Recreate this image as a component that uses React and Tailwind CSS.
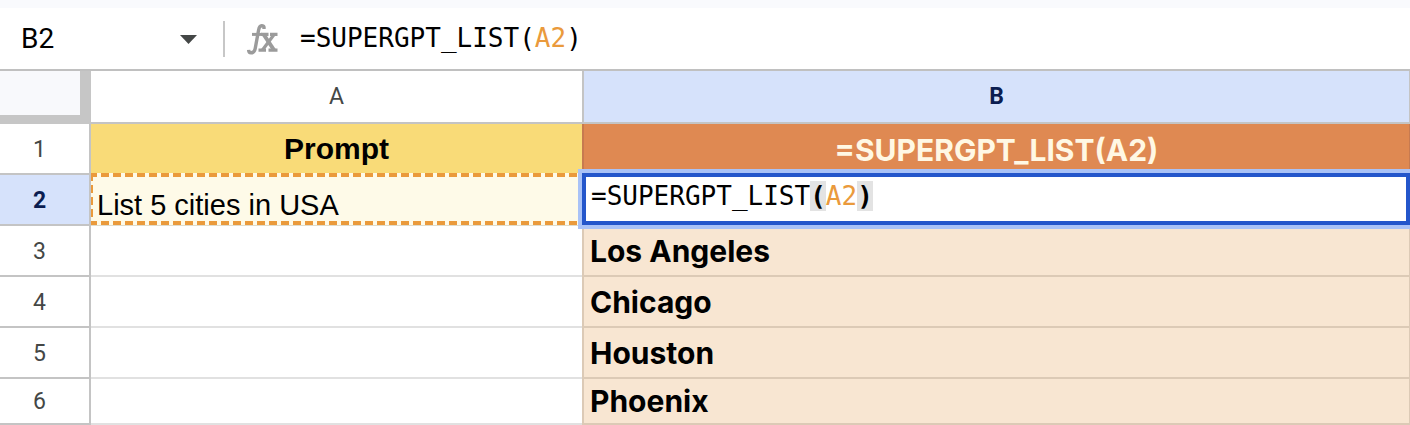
import React, { useState } from 'react';

const rows = [
  { id: 3, city: 'Los Angeles' },
  { id: 4, city: 'Chicago' },
  { id: 5, city: 'Houston' },
  { id: 6, city: 'Phoenix' },
];

const FxIcon = () => (
  <svg className="w-9 h-9 shrink-0" viewBox="0 0 36 36" fill="none" stroke="#9b9b9b" aria-hidden="true">
    <path d="M19 9V7.2Q18.6 5.6 16.6 5.7C14.6 5.8 14 7.8 13.6 10L10.4 27.5C9.8 31.5 8.6 32.8 6 32.8Q3.8 32.8 3.6 29.8" strokeWidth="3.4" />
    <path d="M7 14.4H17" strokeWidth="3" />
    <path d="M16 14.4H23.5M25 14.4H32.5M13.5 30.2H21M23.5 30.2H32.5" strokeWidth="3.2" />
    <path d="M19 15L29 30" strokeWidth="4" />
    <path d="M28.7 15L17.5 30" strokeWidth="3.2" />
  </svg>
);

const NameBox = () => {
  const [cell, setCell] = useState('B2');

  return (
    <div className="flex items-center w-[223px] shrink-0 pl-[21px] pr-6">
      <input
        aria-label="Name box"
        value={cell}
        onChange={(e) => setCell(e.target.value)}
        className="flex-1 min-w-0 bg-transparent outline-none text-[28px] leading-8 text-black font-['Roboto',sans-serif]"
      />
      <button type="button" aria-label="Named ranges" className="flex items-center justify-center">
        <svg className="w-[22px] h-3" viewBox="0 0 22 12" fill="#444746" aria-hidden="true">
          <path d="M3 2H20L11.5 11Z" />
        </svg>
      </button>
    </div>
  );
};

const Formula = ({ label, highlight }) => {
  const paren = highlight ? 'bg-[#e3e3e3] font-bold' : '';

  return (
    <div
      role="textbox"
      aria-label={label}
      contentEditable
      suppressContentEditableWarning
      spellCheck={false}
      className="outline-none whitespace-nowrap text-[26px] leading-[34px] text-black font-['DejaVu_Sans_Mono',monospace]"
    >
      =SUPERGPT_LIST<span className={paren}>(</span>
      <span className="text-[#ea9a3c]">A2</span>
      <span className={paren}>)</span>
    </div>
  );
};

// dashed outline around the cell that the formula refers to
const ReferenceOutline = () => (
  <div className="absolute -top-0.5 -bottom-px inset-x-0 pointer-events-none">
    <div className="absolute top-0 inset-x-0 h-1 bg-[repeating-linear-gradient(90deg,#ea9a3c_0_6px,#fefae8_6px_10px,#ea9a3c_10px_12px)]" />
    <div className="absolute bottom-0 inset-x-0 h-1 bg-[repeating-linear-gradient(90deg,#ea9a3c_0_6px,#fefae8_6px_10px,#ea9a3c_10px_12px)]" />
    <div className="absolute left-0 inset-y-0 w-0.5 bg-[repeating-linear-gradient(180deg,#ea9a3c_0_8px,#fefae8_8px_12px)]" />
  </div>
);

const RowHeader = ({ children, active }) => (
  <th
    scope="row"
    className={`border-r-2 border-b-2 border-[#c4c4c4] text-[23px] leading-7 p-0 pt-0.5 pr-2.5 font-['Roboto',sans-serif] ${
      active ? 'bg-[#d6e2fb] text-[#0b1d51] font-bold' : 'bg-white text-[#444746] font-normal'
    }`}
  >
    {children}
  </th>
);

const App = () => {
  return (
    <div className="bg-white overflow-hidden">
      <div className="h-2 bg-[#f9fafd]" />
      <div className="flex items-center h-[63px] border-b-2 border-[#c0c0c0]">
        <NameBox />
        <div className="w-0.5 h-9 bg-[#c7c7c7]" />
        <div className="flex items-center flex-1 pl-5 pb-0.5 gap-[19px]">
          <FxIcon />
          <Formula label="Formula bar" />
        </div>
      </div>

      <table className="w-full table-fixed border-separate border-spacing-0">
        <colgroup>
          <col className="w-[91px]" />
          <col className="w-[491px]" />
          <col />
        </colgroup>
        <thead>
          <tr className="h-[53px] text-[23px] leading-7 font-['Roboto',sans-serif]">
            <td className="p-0 bg-[#f8f9fc] border-r-[11px] border-b-[9px] border-[#c6c6c6]" />
            <th scope="col" className="bg-white border-b-2 border-[#c4c4c4] font-normal text-[#444746]">
              A
            </th>
            <th scope="col" className="bg-[#d6e2fb] border-l-2 border-r border-b-2 border-[#c4c4c4] font-bold text-[#0b1d51]">
              B
            </th>
          </tr>
        </thead>
        <tbody>
          <tr className="h-[51px]">
            <RowHeader>1</RowHeader>
            <td className="p-0 bg-[#f9db78] border-b-2 border-[#d9d9d9] text-center align-middle text-[30px] leading-9 font-bold font-['Liberation_Sans',sans-serif]">
              Prompt
            </td>
            <td className="p-0 bg-[#df8952] border-l-2 border-r border-[#c77a50] text-center align-middle text-[30px] leading-9 font-bold text-[#fff8e4] font-['Inter',sans-serif]">
              =SUPERGPT_LIST(A2)
            </td>
          </tr>
          <tr className="h-[51px]">
            <RowHeader active>2</RowHeader>
            <td className="relative p-0 pl-1.5 pb-px bg-[#fefae8] border-b-2 border-[#e0dccc] align-bottom text-[29px] leading-9 text-black font-['Liberation_Sans',sans-serif]">
              List 5 cities in USA
              <ReferenceOutline />
            </td>
            <td className="relative p-0 bg-white">
              <div className="absolute z-10 -top-0.5 bottom-px inset-x-0 pl-[5px] pt-0.5 border-4 border-[#2456cb] bg-white outline-4 outline-[#a9c2f7]">
                <Formula label="Cell B2" highlight />
              </div>
            </td>
          </tr>
          {rows.map((row) => (
            <tr key={row.id} className={row.id === 6 ? 'h-[46px]' : 'h-[51px]'}>
              <RowHeader>{row.id}</RowHeader>
              <td className="p-0 bg-white border-b-2 border-[#e1e1e1]" />
              <td className="p-0 pl-1.5 bg-[#f8e6d2] border-l-2 border-r border-b-2 border-[#dccab6] align-middle text-[30px] leading-9 font-bold text-black font-['Inter',sans-serif]">
                {row.city}
              </td>
            </tr>
          ))}
        </tbody>
      </table>
    </div>
  );
};

export default App;
